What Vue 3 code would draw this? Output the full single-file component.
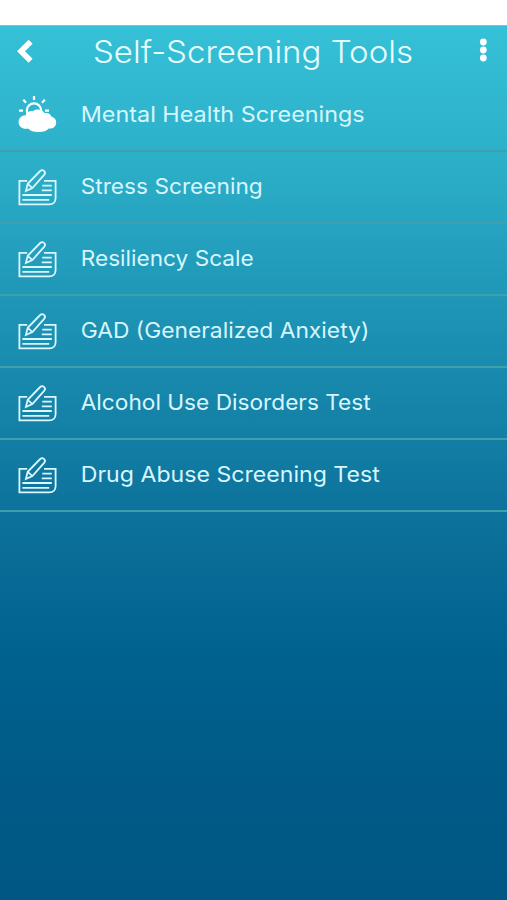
<script setup>
const items = [
  { label: 'Mental Health Screenings', icon: 'weather', width: 284 },
  { label: 'Stress Screening', icon: 'form', width: 182 },
  { label: 'Resiliency Scale', icon: 'form', width: 173 },
  { label: 'GAD (Generalized Anxiety)', icon: 'form', width: 288.5 },
  { label: 'Alcohol Use Disorders Test', icon: 'form', width: 290 },
  { label: 'Drug Abuse Screening Test', icon: 'form', width: 299 },
]
</script>

<template>
  <div class="screen">
    <div class="status"></div>
    <main class="app">
      <header class="bar">
        <svg class="back" width="20" height="26" viewBox="0 0 20 26">
          <path d="M15.6 3.8 6 13.3l9.6 9.5" fill="none" stroke="#fff" stroke-width="5.6" />
        </svg>
        <svg class="title" width="322" height="50">
          <text x="0" y="37.3" textLength="320" lengthAdjust="spacingAndGlyphs">Self-Screening Tools</text>
        </svg>
        <svg class="more" width="8" height="24" viewBox="0 0 8 24" fill="#fff">
          <circle cx="4.3" cy="4" r="3.4" />
          <circle cx="4.3" cy="12" r="3.4" />
          <circle cx="4.3" cy="20" r="3.4" />
        </svg>
      </header>
      <ul class="list">
        <li v-for="item in items" :key="item.label" class="row">
          <svg v-if="item.icon === 'weather'" class="icon" width="40" height="40" viewBox="0 0 40 40">
            <g fill="none" stroke="#fff" stroke-width="2.2">
              <circle cx="17" cy="15.5" r="7.2" />
              <path d="M17 1v4M6.3 4.8l2.8 3M27.8 4.8l-2.8 3M2 15.6h4M28 15.6h4" />
            </g>
            <path fill="#fff" d="M9 33.8C5 34 1.6 31.2 1.6 27.2c0-4 3-6.9 6.9-6.9 1.2-3.2 4.2-4.9 7.4-4.2 1.3-1.2 3-1.7 5-1.7 3 0 5.6 1.5 6.8 3.9 3-.8 6 .9 6.9 3.5 2.7.6 4.6 2.7 4.6 5.6 0 4-3.3 6.6-7.5 6.1-1.8 2.4-5.2 3.5-10.4 3.5-4.8 0-8-.9-9.7-3.3-.8.1-1.7.1-2.6.1z" />
          </svg>
          <svg v-else class="icon" width="40" height="40" viewBox="0 0 40 40" fill="none" stroke="#dcf8ff" stroke-width="1.8">
            <path d="M10.2 13.9H2.4v23.5h29.8c4 0 6.4-2.6 6.4-6.2V13.9H27" />
            <path d="M8.9 24 10.7 16.8 23.2 4c2.4-2.3 6.3.8 4.1 3.6L15.4 21l-6.5 3zM11 17.2l3.9 3.5" />
            <path d="M25.3 18.7h9.5M24.8 23.3h10M5.4 28h29.4M5.4 32.8h26.8" />
          </svg>
          <svg class="label" width="340" height="40">
            <text x="-0.3" y="27" :textLength="item.width" lengthAdjust="spacingAndGlyphs">{{ item.label }}</text>
          </svg>
        </li>
      </ul>
    </main>
  </div>
</template>

<style>
body {
  margin: 0;
}
</style>

<style scoped>
.screen {
  width: 100%;
  height: 900px;
  display: flex;
  flex-direction: column;
  overflow: hidden;
  font-family: Inter, "Open Sans", sans-serif;
}
.status {
  height: 25px;
  background: #fff;
}
.app {
  flex: 1;
  box-sizing: border-box;
  border-top: 1px solid #68cadb;
  background: linear-gradient(#35c1d7 0, #2db1ca 124px, #1c91b3 305px, #0e749d 475px, #00618f 635px, #005a87 760px, #005783 100%) border-box no-repeat;
}
.bar {
  height: 54px;
  display: flex;
  align-items: flex-start;
}
.back {
  margin: 12px 0 0 15px;
}
.title {
  margin-left: 58px;
}
.title text {
  font-size: 31.3px;
  font-weight: 300;
  fill: #e8fdff;
}
.more {
  margin: 12px 0 0 64px;
}
.list {
  margin: 0;
  padding: 0;
  list-style: none;
}
.row {
  height: 72px;
  box-sizing: border-box;
  border-bottom: 2px solid #3ea0ab;
  display: flex;
  align-items: center;
  padding: 0 0 0 17px;
}
.icon {
  flex: none;
}
.label {
  margin-left: 24px;
  overflow: visible;
}
.label text {
  font-size: 21.5px;
  font-weight: 400;
  fill: #d6f6fd;
}
</style>
